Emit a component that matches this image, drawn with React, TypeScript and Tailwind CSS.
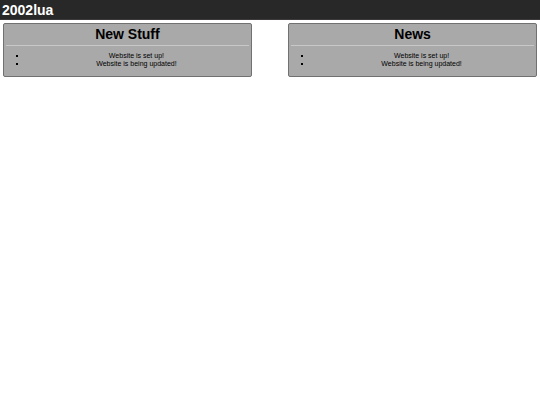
interface PanelProps {
  title: string;
  items: string[];
}

const updates = ["Website is set up!", "Website is being updated!"];

function Panel({ title, items }: PanelProps) {
  return (
    <section className="w-[46.6%] rounded-xs border border-[#717171] bg-[#a9a9a9] px-0.5 pb-2 text-center">
      <h2 className="text-[14px] leading-5 font-bold">{title}</h2>
      <hr className="mt-px mb-1.5 border-[#c8c8c8]" />
      <ul className="pl-2.5 text-[7px] leading-2">
        {items.map((item) => (
          <li
            key={item}
            className="flex items-center gap-1.5 before:size-0.5 before:bg-black"
          >
            <span className="flex-1">{item}</span>
          </li>
        ))}
      </ul>
    </section>
  );
}

export default function App() {
  return (
    <div className="font-['Liberation_Sans',Arial,sans-serif] text-black">
      <header className="border-b border-[#3c383c] bg-[#282828] px-0.5 pt-px">
        <h1 className="text-[14px] leading-[18px] font-bold text-white">2002lua</h1>
      </header>
      <main className="flex items-start justify-between p-[3px]">
        <Panel title="New Stuff" items={updates} />
        <Panel title="News" items={updates} />
      </main>
    </div>
  );
}
